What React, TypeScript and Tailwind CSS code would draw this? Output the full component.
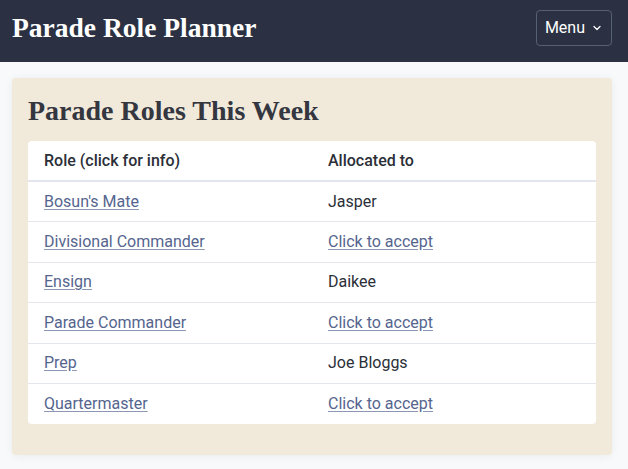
import { ChevronDown } from 'lucide-react'

const roles = [
  { role: "Bosun's Mate", who: 'Jasper' },
  { role: 'Divisional Commander', who: null },
  { role: 'Ensign', who: 'Daikee' },
  { role: 'Parade Commander', who: null },
  { role: 'Prep', who: 'Joe Bloggs' },
  { role: 'Quartermaster', who: null },
]

const serif = "font-['Liberation_Serif',serif]"
const link = 'text-[#55658e] underline decoration-[#8c97b3] underline-offset-2'

export default function App() {
  return (
    <div className="min-h-[469px] bg-[#f8f9fb] font-['Roboto',sans-serif] text-[#2b2f38]">
      {/* Header */}
      <header className="flex h-[62px] items-center justify-between bg-[#2b3142] pb-[7px] pl-3 pr-4">
        <h1 className={`${serif} text-[27.5px] font-bold text-white`}>Parade Role Planner</h1>
        <button className="flex h-[36px] items-center gap-1.5 rounded border border-[#566074] px-2 text-[16px] text-white">
          Menu
          <ChevronDown size={12} strokeWidth={2.5} />
        </button>
      </header>

      <main className="pl-3 pr-4 pt-4">
        <section className="rounded bg-[#f1e9da] px-4 pb-[31px] pt-[15px] shadow-[0_1px_10px_rgba(0,0,0,0.06)]">
          <h2 className={`${serif} mb-[12px] text-[28px] font-bold leading-[36px] text-[#343640]`}>
            Parade Roles This Week
          </h2>
          <div className="overflow-hidden rounded bg-white">
            <table className="w-full border-collapse text-left text-[16px]">
              <thead>
                <tr className="border-b-2 border-[#e3e6ec]">
                  <th className="h-[40px] w-1/2 px-4 font-medium">Role (click for info)</th>
                  <th className="h-[40px] px-4 font-medium">Allocated to</th>
                </tr>
              </thead>
              <tbody>
                {roles.map((r, i) => (
                  <tr key={r.role} className={i < roles.length - 1 ? 'border-b border-[#e3e6ec]' : ''}>
                    <td className="h-[40.5px] px-4">
                      <a href="#" className={link}>
                        {r.role}
                      </a>
                    </td>
                    <td className="h-[40.5px] px-4">
                      {r.who ? (
                        r.who
                      ) : (
                        <a href="#" className={link}>
                          Click to accept
                        </a>
                      )}
                    </td>
                  </tr>
                ))}
              </tbody>
            </table>
          </div>
        </section>
      </main>
    </div>
  )
}
